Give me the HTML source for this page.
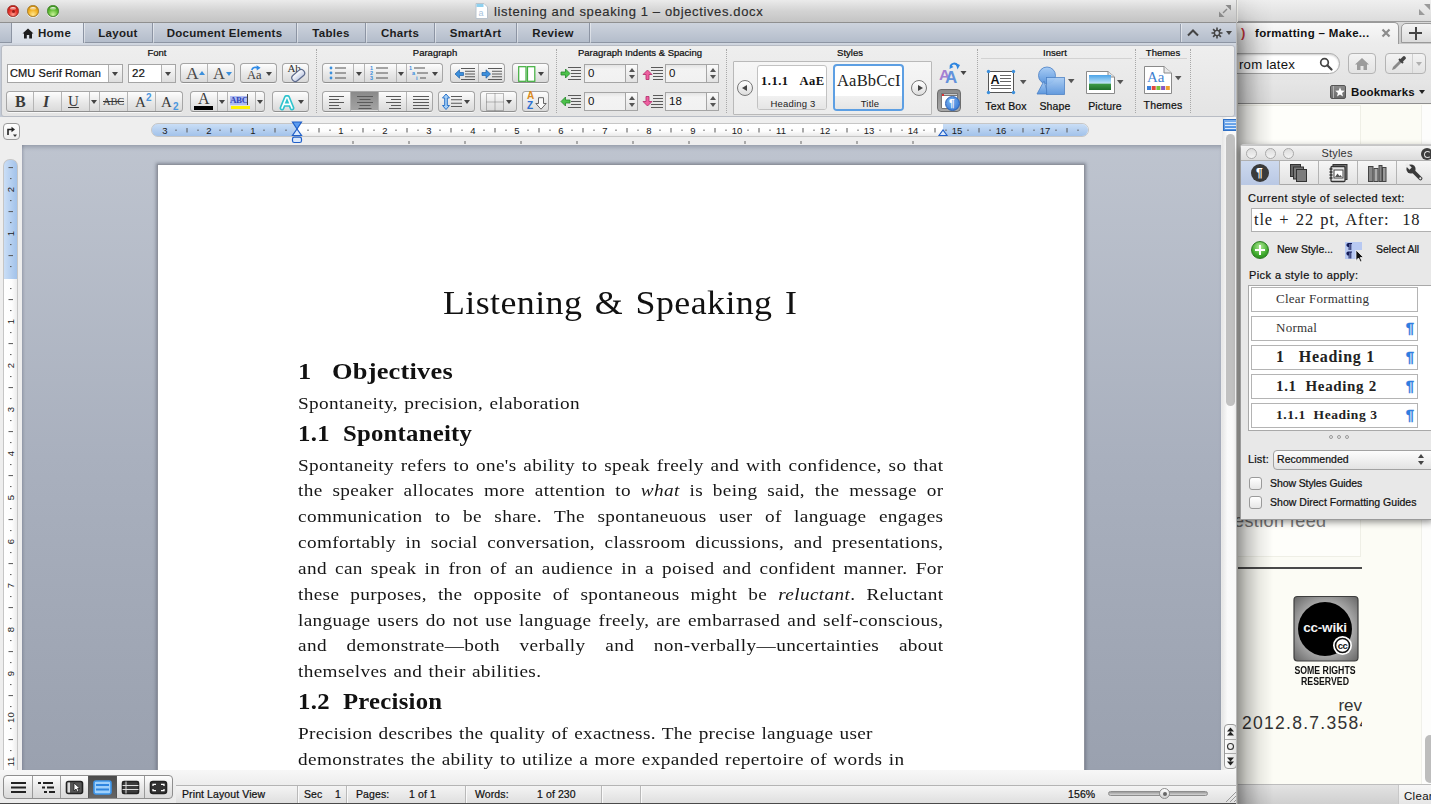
<!DOCTYPE html>
<html><head><meta charset="utf-8">
<style>
*{box-sizing:border-box;margin:0;padding:0}
html,body{width:1431px;height:804px;overflow:hidden;background:#fbfaf4;font-family:"Liberation Sans",sans-serif;font-size:11px;color:#111}
.abs{position:absolute}
#word{position:absolute;left:0;top:0;width:1237px;height:804px;background:#e9e9e9;overflow:hidden;box-shadow:none;border-right:1px solid rgba(110,110,110,.4)}
#titlebar{position:absolute;left:0;top:0;width:1238px;height:23px;background:linear-gradient(#ebebeb,#d3d3d3 50%,#c4c4c4);border-bottom:1px solid #8f8f8f}
#titlebar .t{position:absolute;left:494px;top:4px;font-size:13px;color:#2c2c2c;letter-spacing:.63px;white-space:nowrap;-webkit-text-stroke:.15px #2c2c2c}
.tl{position:absolute;top:5px;width:11.600px;height:11.600px;border-radius:50%}
#wtabs{position:absolute;left:0;top:23px;width:1238px;height:20px;background:linear-gradient(#cdd3dd,#b4bdcb);border-bottom:1px solid #8d95a3}
.wtab{position:absolute;top:0;height:20px;border-right:1px solid #8c94a3;font-weight:bold;font-size:11.5px;color:#1d1d1d;text-align:center;line-height:20px;letter-spacing:.3px;box-shadow:1px 0 0 rgba(255,255,255,.45)}
#ribbon{position:absolute;left:0;top:43px;width:1238px;height:74px;background:linear-gradient(#d2d8e1,#c9cfda 4px,#c3cad6 8px)}
#ribin{position:absolute;left:1px;top:2px;width:1234px;height:72px;background:linear-gradient(#eeeeee,#e4e4e4);border-radius:3px;border:1px solid #b8bcc4}
.glab{position:absolute;top:47px;font-size:9.5px;color:#0c0c0c;text-align:center;letter-spacing:0}
.gsep{position:absolute;top:49px;height:64px;width:0;border-left:1px dotted #a8a8a8}
.btn{position:absolute;height:20px;border:1px solid #a6a6a6;border-bottom-color:#8f8f8f;border-radius:3.5px;background:linear-gradient(#fdfdfd,#e8e8e8 55%,#dadada);box-shadow:0 1px 0 rgba(255,255,255,.7)}
.btn i{position:absolute;top:0;bottom:0;width:0;border-left:1px solid #b5b5b5}
.fld{position:absolute;height:19px;border:1px solid #a5a5a5;background:#fff;font-size:11.5px;line-height:17px;padding-left:3px;letter-spacing:.2px;white-space:nowrap}
.dar{position:absolute;width:0;height:0;border-left:3.5px solid transparent;border-right:3.5px solid transparent;border-top:4px solid #444}
#rulerbar{position:absolute;left:0;top:117px;width:1238px;height:28px;background:#eeeeee}
#docarea{position:absolute;left:22px;top:145px;width:1199px;height:625px;background:linear-gradient(#bec4cf,#a9b0be 50%,#9aa1af);box-shadow:inset 0 4px 4px -2px rgba(40,50,70,.28),inset 3px 0 3px -2px rgba(40,50,70,.2)}
#page{position:absolute;left:158px;top:165px;width:926px;height:620px;background:#fff;box-shadow:0 0 0 1px #8e929c,0 0 3px 2px rgba(80,85,100,.5)}
#vrul{position:absolute;left:0;top:145px;width:22px;height:625px;background:#eeeeee}
#status{position:absolute;left:0;top:770px;width:1238px;height:34px;background:linear-gradient(#f7f7f7,#ededed 15px,#ececec)}
.doc{font-family:"Liberation Serif",serif;color:#111;position:absolute;white-space:nowrap}
.jl{position:absolute;left:298px;width:586.8px;transform:scaleX(1.1);transform-origin:0 0;height:26px;font-family:"Liberation Serif",serif;font-size:17.5px;text-align:justify;text-align-last:justify;white-space:normal;color:#161616;line-height:26px;letter-spacing:.33px}
.nl{position:absolute;left:298px;transform:scaleX(1.1);transform-origin:0 0;height:26px;font-family:"Liberation Serif",serif;font-size:17.5px;word-spacing:1px;white-space:nowrap;color:#161616;line-height:26px;letter-spacing:.33px}
.h2{position:absolute;left:298px;transform:scaleX(1.1);transform-origin:0 0;font-family:"Liberation Serif",serif;font-weight:bold;font-size:22.5px;white-space:nowrap;color:#111;letter-spacing:.22px}
#ff{position:absolute;left:1237px;top:0;width:194px;height:804px;background:#fbfaf4}
#pal{position:absolute;left:1240px;top:145px;width:193px;height:375px;background:#e8e8e8;border:1px solid #9a9a9a;border-top-color:#c5c5c5;box-shadow:0 -1px 0 #c9c9c9,0 2px 7px rgba(0,0,0,.45);border-radius:4px 0 0 0;overflow:visible}
.srow{position:absolute;left:10px;width:167px;height:25px;background:#fff;border:1px solid #b4b4b4;font-family:"Liberation Serif",serif;white-space:nowrap}
.pil{position:absolute;right:3px;top:2px;color:#2f7de0;font-size:15px;-webkit-text-stroke:.3px #2f7de0;font-family:"Liberation Sans",sans-serif;font-weight:bold}
.sA{position:absolute;font-family:"Liberation Serif",serif;color:#6a6a6a;line-height:20px;white-space:nowrap}
.tu{position:absolute;width:0;height:0;border-left:3.5px solid transparent;border-right:3.5px solid transparent;border-bottom:4.5px solid #3b8fdc}
.td{position:absolute;width:0;height:0;border-left:3.5px solid transparent;border-right:3.5px solid transparent;border-top:4.5px solid #3b8fdc}
.cbb{position:absolute;right:0;top:0;width:14px;height:17px;border-left:1px solid #b0b0b0;background:linear-gradient(#fafafa,#dedede)}
.cbb:after{content:"";position:absolute;left:3px;top:7px;border-left:3.5px solid transparent;border-right:3.5px solid transparent;border-top:4px solid #444}
.spin{position:absolute;width:13px;height:19px;border:1px solid #a5a5a5;background:linear-gradient(#fbfbfb,#e2e2e2)}
.spin:before{content:"";position:absolute;left:2.5px;top:3px;border-left:3px solid transparent;border-right:3px solid transparent;border-bottom:4px solid #555}
.spin:after{content:"";position:absolute;left:2.5px;top:10px;border-left:3px solid transparent;border-right:3px solid transparent;border-top:4px solid #555}
.circ{position:absolute;width:16px;height:16px;border-radius:50%;border:1px solid #777;background:linear-gradient(#fff,#ddd)}
.circ b{position:absolute;width:0;height:0}
.ilab{position:absolute;top:99px;font-size:10.5px;text-align:center;color:#111;letter-spacing:.15px;white-space:nowrap}
.stx{position:absolute;top:788px;font-size:10.5px;line-height:13px;color:#111;white-space:nowrap;letter-spacing:.1px}
.sdiv{position:absolute;top:786px;width:1px;height:18px;background:#b9b9b9;box-shadow:1px 0 0 #fafafa}
.pc{position:absolute;top:2px;width:11px;height:11px;border-radius:50%;border:1px solid #a9a9a9;background:linear-gradient(#dcdcdc,#f4f4f4)}
.pt{position:absolute;margin-top:-1px;font-size:11px;line-height:14px;color:#111;white-space:nowrap;letter-spacing:.15px}
.pcb{position:absolute;left:8px;width:13px;height:13px;border:1px solid #9a9a9a;border-radius:3px;background:linear-gradient(#fff,#e6e6e6)}
.pt,.glab,.ilab,.stx{-webkit-text-stroke:.22px #111}
.gl{position:absolute;left:2px;top:.5px;width:5.600px;height:3.500px;border-radius:50%;background:linear-gradient(rgba(255,255,255,.9),rgba(255,255,255,.15))}
</style></head><body>

<!-- FIREFOX BEHIND -->
<div id="ff"><div class="abs" style="left:1px;top:0;width:193px;height:804px">
  <div class="abs" style="left:0;top:0;width:193px;height:22px;background:linear-gradient(#efefef,#dcdcdc);border-bottom:1px solid #9c9c9c"></div>
  <svg class="abs" style="left:180px;top:3px" width="13" height="13" viewBox="0 0 13 13"><path d="M6 1H12V7ZM1 6V12H7Z" fill="#9a9a9a"/></svg>
  <!-- tab strip -->
  <div class="abs" style="left:0;top:22px;width:193px;height:22px;background:linear-gradient(#d9d9d9,#c9c9c9)"></div>
  <div class="abs" style="left:-10px;top:22px;width:171px;height:23px;border:1px solid #9a9a9a;border-bottom:none;border-radius:5px 5px 0 0;background:linear-gradient(#f8f8f8,#ebebeb)"></div>
  <div class="abs" style="left:163px;top:23px;width:34px;height:20px;border:1px solid #9a9a9a;border-radius:5px 5px 0 0;background:linear-gradient(#f4f4f4,#dcdcdc)"></div>
  <div class="abs" style="left:171px;top:32px;width:13px;height:2px;background:#444"></div><div class="abs" style="left:176.500px;top:26.500px;width:2px;height:13px;background:#444"></div>
  <div class="abs" style="left:17px;top:26px;font-size:11.500px;font-weight:bold;color:#111;white-space:nowrap;letter-spacing:.32px;line-height:14px" id="fftab">formatting – Make...</div>
  <svg class="abs" style="left:143px;top:28px" width="10" height="10" viewBox="0 0 10 10"><path d="M1.500 1.500L8.500 8.500M8.500 1.500L1.500 8.500" stroke="#8c8c8c" stroke-width="2.200"/></svg>
  <div class="abs" style="left:3px;top:24px;color:#c8363c;font-size:13px;font-weight:bold;line-height:18px">)</div>
  <!-- nav bar -->
  <div class="abs" style="left:0;top:44px;width:193px;height:36px;background:linear-gradient(#ececec,#e4e4e4)"></div>
  <div class="abs" style="left:-20px;top:53px;width:122px;height:21px;border:1px solid #a8a8a8;border-radius:11px;background:#fff;box-shadow:inset 0 1px 2px rgba(0,0,0,.2)"></div>
  <div class="abs" style="left:1px;top:56px;font-size:13.200px;color:#111;line-height:18px;white-space:nowrap;letter-spacing:.2px" id="ffq">rom latex</div>
  <svg class="abs" style="left:81px;top:57px" width="14" height="14" viewBox="0 0 14 14"><circle cx="5.500" cy="5.500" r="3.800" fill="none" stroke="#444" stroke-width="1.700"/><path d="M8.300 8.300L12.500 12.500" stroke="#444" stroke-width="2.200" stroke-linecap="round"/></svg>
  <div class="abs" style="left:110px;top:53px;width:28px;height:21px;border:1px solid #b4b4b4;border-radius:4px;background:linear-gradient(#f3f3f3,#e3e3e3)"><svg class="abs" style="left:5px;top:3px" width="16" height="14" viewBox="0 0 16 14"><path d="M8 1L15 7.500H13V13H9.500V9H6.500V13H3V7.500H1Z" fill="#9c9c9c"/></svg></div>
  <div class="abs" style="left:147px;top:53px;width:41px;height:21px;border:1px solid #b4b4b4;border-radius:4px;background:linear-gradient(#f3f3f3,#e3e3e3)"><svg class="abs" style="left:4px;top:2px" width="18" height="16" viewBox="0 0 18 16"><path d="M2 14L3 11L9.500 4.500L11.500 6.500L5 13Z" fill="#8a8a8a"/><path d="M9 3L13 7" stroke="#444" stroke-width="2"/><path d="M11.500 4.500L14 2" stroke="#444" stroke-width="3.600" stroke-linecap="round"/></svg><div class="abs" style="left:26px;top:0;width:1px;height:19px;background:#d0d0d0"></div><div class="abs" style="left:30px;top:8px;border-left:3px solid transparent;border-right:3px solid transparent;border-top:4px solid #b0b0b0"></div></div>
  <!-- bookmarks bar -->
  <div class="abs" style="left:0;top:80px;width:193px;height:24px;background:linear-gradient(#e6e6e6,#dedede);border-bottom:1px solid #8f8f8f"></div>
  <div class="abs" style="left:92px;top:85px;width:16px;height:14px;border-radius:2px;background:linear-gradient(#8a8a8a,#6a6a6a);border:1px solid #555"><div class="abs" style="left:2px;top:0;width:1px;height:12px;background:#b5b5b5"></div><svg class="abs" style="left:3.500px;top:1px" width="10" height="10" viewBox="0 0 10 10"><path d="M5 .3L6.300 3.600L9.800 3.800L7.100 6L8 9.500L5 7.600L2 9.500L2.900 6L.2 3.800L3.700 3.600Z" fill="#fff"/></svg></div>
  <div class="abs" style="left:113px;top:85px;font-size:11.500px;font-weight:bold;color:#111;white-space:nowrap;letter-spacing:.12px;line-height:14px" id="ffbm">Bookmarks</div>
  <div class="abs" style="left:181px;top:90px;border-left:3.500px solid transparent;border-right:3.500px solid transparent;border-top:4px solid #222"></div>
  <!-- page content -->
  <div class="abs" style="left:0;top:105px;width:193px;height:680px;background:#fcfcf5"></div>
  <div class="abs" style="left:183px;top:105px;width:10px;height:680px;background:#fdfdfc;border-left:1px solid #f0f0ea"></div>
  <div class="abs" style="left:0;top:105px;width:123px;height:452px;background:#fefefa;border:1px solid #efefe6;border-left:none"></div>
  <div class="abs" style="left:-4px;top:510px;font-size:18px;color:#7a7a7a;white-space:nowrap;line-height:22px;letter-spacing:.4px">estion feed</div>
  <div class="abs" style="left:0;top:567px;width:124px;height:2px;background:#4a4a4a"></div>
  <!-- cc badge -->
  <svg class="abs" style="left:55px;top:595px" width="66" height="68" viewBox="0 0 66 68"><defs><radialGradient id="ccg" cx=".5" cy=".5" r=".75"><stop offset="0" stop-color="#e8e8e8"/><stop offset=".55" stop-color="#a8a8a8"/><stop offset="1" stop-color="#5a5a5a"/></radialGradient></defs><rect x="1" y="1.500" width="64" height="64.500" rx="3.500" fill="url(#ccg)" stroke="#3e3e3e" stroke-width="1.200"/><circle cx="32" cy="34" r="27" fill="#000"/><text x="32" y="36.500" text-anchor="middle" font-family="Liberation Sans" font-weight="bold" font-size="13.500" fill="#f4f4f4" letter-spacing="-.2">cc-wiki</text><circle cx="49.500" cy="50.500" r="9.500" fill="#fff"/><circle cx="49.500" cy="50.500" r="7" fill="none" stroke="#111" stroke-width="1.600"/><text x="49.500" y="53.600" text-anchor="middle" font-family="Liberation Sans" font-weight="bold" font-size="9.500" fill="#111" letter-spacing="-.6">cc</text></svg>
  <div class="abs" style="left:56px;top:664px;width:64px;text-align:center;font-size:11.500px;line-height:10.500px;color:#111;letter-spacing:0;white-space:nowrap;font-weight:bold;transform:scaleX(.76);left:41px;width:92px;top:665px">SOME RIGHTS<br>RESERVED</div>
  <div class="abs" style="left:60px;top:696px;width:64px;text-align:right;font-size:17px;color:#333;line-height:20px">rev</div>
  <div class="abs" style="left:4px;top:712.500px;width:120px;overflow:hidden;font-size:17.500px;color:#333;line-height:20px;white-space:nowrap;letter-spacing:1.28px">2012.8.7.35844</div>
  <!-- scrollbar -->
  <div class="abs" style="left:187px;top:735px;width:10px;height:48px;border-radius:5px;background:#bdbdbd"></div>
  <!-- bottom bar -->
  <div class="abs" style="left:0;top:784px;width:193px;height:20px;background:linear-gradient(#e3e3e3,#cfcfcf);border-top:1px solid #bdbdbd"></div>
  <div class="abs" style="left:160px;top:785px;width:40px;height:19px;background:linear-gradient(#f7f7f7,#e6e6e6);border-left:1px solid #c8c8c8"></div>
  <div class="abs" style="left:166px;top:789px;font-size:11.500px;color:#111;line-height:14px;letter-spacing:.3px">Clear</div>
  </div>
  <!-- shadow of word window -->
  <div class="abs" style="left:0;top:0;width:36px;height:804px;background:linear-gradient(90deg,rgba(0,0,0,.42),rgba(0,0,0,.22) 28%,rgba(0,0,0,.08) 62%,rgba(0,0,0,0));-webkit-mask-image:linear-gradient(180deg,rgba(0,0,0,.1) 0,rgba(0,0,0,.3) 18px,rgba(0,0,0,.85) 34px,#000 55px)"></div>
</div>
<!-- WORD WINDOW -->
<div id="word">
<div id="titlebar">
  <div class="tl" style="left:7.300px;background:radial-gradient(circle at 50% 85%,#ff9d90 0,#e8352c 45%,#b3140e 100%);border:1px solid #9e2a22;box-shadow:0 1px 0 rgba(255,255,255,.6)"><b class="gl"></b><b class="abs" style="left:3.300px;top:3.500px;width:3px;height:3px;border-radius:50%;background:#7a0c08;opacity:.75"></b></div>
  <div class="tl" style="left:27.200px;background:radial-gradient(circle at 50% 85%,#ffe68f 0,#f2b122 50%,#c07f08 100%);border:1px solid #a9781a;box-shadow:0 1px 0 rgba(255,255,255,.6)"><b class="gl"></b></div>
  <div class="tl" style="left:47px;background:radial-gradient(circle at 50% 85%,#c9f39a 0,#63bd35 50%,#2c8414 100%);border:1px solid #3b8423;box-shadow:0 1px 0 rgba(255,255,255,.6)"><b class="gl"></b></div>
  <svg class="abs" style="left:475px;top:3px" width="13" height="16" viewBox="0 0 13 16"><path d="M1 .5H9L12.500 4V15.500H1Z" fill="#fff" stroke="#b9c3cc" stroke-width="1"/><rect x="1.500" y="1" width="7" height="3" fill="#8fd0ee"/><text x="3.500" y="13" font-family="Liberation Sans" font-size="9" fill="#a9c4dc">a</text></svg>
  <svg class="abs" style="left:1218px;top:4px" width="14" height="14" viewBox="0 0 14 14"><path d="M7.500 1H13V6.500ZM1 7.500V13H6.500Z" fill="#8a8a8a"/><path d="M9 5L5 9" stroke="#8a8a8a" stroke-width="1.500"/></svg>
  <div class="t">listening and speaking 1 – objectives.docx</div>
</div>
<div id="wtabs">
  <div class="wtab" style="left:11px;width:73px;background:linear-gradient(#e6eaf0,#d6dce6);border-left:1px solid #8c94a3;height:21px"><svg class="abs" style="left:10px;top:5px" width="12" height="11" viewBox="0 0 12 11"><path d="M6 .5L11.500 5.500H10V10.500H7.200V7H4.800V10.500H2V5.500H.5Z" fill="#1d1d1d"/></svg><span style="padding-left:14px">Home</span></div>
  <div class="wtab" style="left:84px;width:69px">Layout</div>
  <div class="wtab" style="left:153px;width:144px">Document Elements</div>
  <div class="wtab" style="left:297px;width:69px">Tables</div>
  <div class="wtab" style="left:366px;width:69px">Charts</div>
  <div class="wtab" style="left:435px;width:82px">SmartArt</div>
  <div class="wtab" style="left:517px;width:73px">Review</div>
</div>
<div id="ribbon"><div id="ribin"></div></div>
<!--RIBBON-CONTENT-->
<div class="glab" style="left:137px;width:40px">Font</div>
<div class="glab" style="left:395px;width:80px">Paragraph</div>
<div class="glab" style="left:560px;width:160px">Paragraph Indents &amp; Spacing</div>
<div class="glab" style="left:820px;width:60px">Styles</div>
<div class="glab" style="left:1025px;width:60px">Insert</div>
<div class="glab" style="left:1133px;width:60px">Themes</div>
<div class="gsep" style="left:316px"></div>
<div class="gsep" style="left:556px"></div>
<div class="gsep" style="left:726px"></div>
<div class="gsep" style="left:977px"></div>
<div class="gsep" style="left:1135px"></div>
<div class="gsep" style="left:1190px"></div>

<!-- FONT row 1 -->
<div class="fld" style="left:7px;top:64px;width:116px;font-size:11px;letter-spacing:.12px;padding-left:2px;-webkit-text-stroke:.2px #111">CMU Serif Roman<div class="cbb"></div></div>
<div class="fld" style="left:128px;top:64px;width:48px;-webkit-text-stroke:.2px #111">22<div class="cbb"></div></div>
<div class="btn" style="left:180px;top:63px;width:55px"><i style="left:26px"></i>
  <span class="sA" style="left:5px;top:-1px;font-size:17.5px;color:#4a4a4a">A</span><b class="tu" style="left:18px;top:7px"></b>
  <span class="sA" style="left:32px;top:0px;font-size:16.5px;color:#4a4a4a">A</span><b class="td" style="left:45px;top:8px"></b>
</div>
<div class="btn" style="left:240px;top:63px;width:37px">
  <span class="sA" style="left:6px;top:1px;font-size:12.500px;letter-spacing:0;color:#3c3c3c">Aa</span>
  <svg class="abs" style="left:10px;top:1px" width="10" height="6" viewBox="0 0 10 6"><path d="M.8 5C1.500 2.300 4.500 1.800 6.500 2.800" stroke="#2f8ae6" stroke-width="1.700" fill="none"/><path d="M5.500 .3L9.600 2.800L5.800 5.600Z" fill="#2f8ae6"/></svg>
  <div class="dar" style="left:25px;top:8px"></div>
</div>
<div class="btn" style="left:282px;top:63px;width:27px">
  <span class="sA" style="left:4.500px;top:-6px;font-size:11px;color:#2e2e2e;letter-spacing:-.2px">Ab</span>
  <svg class="abs" style="left:5px;top:2px" width="21" height="18" viewBox="0 0 21 18"><defs><linearGradient id="erg" x1="0" y1="0" x2="0" y2="1"><stop offset="0" stop-color="#ffffff"/><stop offset="1" stop-color="#c4cde6"/></linearGradient></defs><rect x="3" y="6" width="14.500" height="7" rx="3.500" fill="url(#erg)" stroke="#5d6a8c" stroke-width="1.200" transform="rotate(-40 10.200 9.500)"/></svg>
</div>

<!-- FONT row 2 -->
<div class="btn" style="left:6px;top:90.500px;width:177px;height:21px"><i style="left:26px"></i><i style="left:54px"></i><i style="left:82px"></i><i style="left:92px"></i><i style="left:120px"></i><i style="left:148px"></i>
  <span class="sA" style="left:8px;top:0;font-size:16px;font-weight:bold;color:#3a3a3a">B</span>
  <span class="sA" style="left:36px;top:0;font-size:16px;font-weight:bold;font-style:italic;color:#3a3a3a">I</span>
  <span class="sA" style="left:61px;top:-1px;font-size:15px;color:#3a3a3a;text-decoration:underline">U</span>
  <div class="dar" style="left:84px;top:8px;border-left-width:3px;border-right-width:3px"></div>
  <span class="sA" style="left:96px;top:0px;font-size:10.5px;color:#3a3a3a;text-decoration:line-through;letter-spacing:-.2px">ABC</span>
  <span class="sA" style="left:128px;top:0px;font-size:15px;color:#3a3a3a">A</span><span class="sA" style="left:139px;top:-4px;font-size:10px;font-weight:bold;color:#4a97df;font-family:'Liberation Sans',sans-serif">2</span>
  <span class="sA" style="left:154px;top:0px;font-size:15px;color:#3a3a3a">A</span><span class="sA" style="left:166px;top:5px;font-size:10px;font-weight:bold;color:#4a97df;font-family:'Liberation Sans',sans-serif">2</span>
</div>
<div class="btn" style="left:190px;top:90.500px;width:75px;height:21px"><i style="left:26px"></i><i style="left:36px"></i><i style="left:64px"></i>
  <span class="sA" style="left:7px;top:-3px;font-size:16px;color:#3a3a3a">A</span>
  <div class="abs" style="left:3px;top:14px;width:19px;height:4px;background:#000"></div>
  <div class="dar" style="left:28px;top:8px;border-left-width:3px;border-right-width:3px"></div>
  <span class="abs" style="left:39px;top:4px;font-family:'Liberation Serif',serif;font-size:9px;line-height:9px;background:#aebcf3;color:#3347b8;letter-spacing:-.4px;height:9px;font-weight:bold">ABC</span>
  <div class="abs" style="left:40px;top:14px;width:19px;height:3px;background:#fff200"></div>
  <div class="abs" style="left:56px;top:2px;width:1px;height:11px;background:#444"></div>
  <div class="dar" style="left:66px;top:8px;border-left-width:3px;border-right-width:3px"></div>
</div>
<div class="btn" style="left:272px;top:90.500px;width:37px;height:21px">
  <svg class="abs" style="left:5px;top:2px" width="18" height="17" viewBox="0 0 18 17"><path d="M4 14 L8.300 3.500 H9.700 L14 14 M6 10.300 H12" stroke="#2fc3cd" stroke-width="4.800" fill="none" stroke-linejoin="round" stroke-linecap="round"/><path d="M4 14 L8.300 3.500 H9.700 L14 14 M6 10.300 H12" stroke="#fbffff" stroke-width="1.700" fill="none" stroke-linejoin="round" stroke-linecap="round"/></svg>
  <div class="dar" style="left:25px;top:8px"></div>
</div>
<!-- PARAGRAPH row 1 -->
<div class="btn" style="left:322px;top:63px;width:121px"><i style="left:30px"></i><i style="left:41px"></i><i style="left:73px"></i><i style="left:83px"></i>
  <svg class="abs" style="left:6px;top:2px" width="20" height="14" viewBox="0 0 20 14"><g fill="#3b8fdc"><circle cx="2" cy="2" r="1.4"/><circle cx="2" cy="7" r="1.4"/><circle cx="2" cy="12" r="1.4"/></g><g stroke="#555" stroke-width="1.15"><path d="M6 2H17M6 7H17M6 12H17"/></g></svg>
  <div class="dar" style="left:33px;top:8px;border-left-width:3px;border-right-width:3px"></div>
  <svg class="abs" style="left:46px;top:1px" width="24" height="16" viewBox="0 0 24 16"><g fill="#3b8fdc" font-family="Liberation Sans" font-size="5.5" font-weight="bold"><text x="1" y="5">1</text><text x="1" y="10">2</text><text x="1" y="15">3</text></g><g stroke="#555" stroke-width="1.15"><path d="M7 3H19M7 8H19M7 13H19"/></g></svg>
  <div class="dar" style="left:75px;top:8px;border-left-width:3px;border-right-width:3px"></div>
  <svg class="abs" style="left:85px;top:1px" width="24" height="16" viewBox="0 0 24 16"><g fill="#3b8fdc" font-family="Liberation Sans" font-size="5.5" font-weight="bold"><text x="1" y="5">1</text><text x="4" y="10">a</text><text x="8" y="15">i</text></g><g stroke="#555" stroke-width="1.15"><path d="M6 3H17M9 8H20M12 13H18"/></g></svg>
  <div class="dar" style="left:109px;top:8px"></div>
</div>
<div class="btn" style="left:450px;top:63px;width:55px"><i style="left:27px"></i>
  <svg class="abs" style="left:3px;top:3px" width="22" height="14" viewBox="0 0 22 14"><g stroke="#5a5a5a" stroke-width="1.05"><path d="M7 1.5H21M11 4.2H21M11 7H21M11 9.8H21M7 12.5H21"/></g><path d="M1 7L5.5 2.8V5.5H9.5V8.5H5.5V11.2Z" fill="#3b8fdc" stroke="#1c5ea8" stroke-width=".7"/></svg>
  <svg class="abs" style="left:30px;top:3px" width="22" height="14" viewBox="0 0 22 14"><g stroke="#5a5a5a" stroke-width="1.05"><path d="M7 1.5H21M11 4.2H21M11 7H21M11 9.8H21M7 12.5H21"/></g><path d="M9.5 7L5 2.8V5.5H1V8.5H5V11.2Z" fill="#3b8fdc" stroke="#1c5ea8" stroke-width=".7"/></svg>
</div>
<div class="btn" style="left:512px;top:63px;width:37px">
  <svg class="abs" style="left:5px;top:2px" width="18" height="16" viewBox="0 0 18 16"><rect x=".7" y=".7" width="7.3" height="14.6" fill="#fff" stroke="#3fae3c" stroke-width="1.2"/><rect x="9.5" y=".7" width="7.3" height="14.6" fill="#fff" stroke="#3fae3c" stroke-width="1.2"/></svg>
  <div class="dar" style="left:25px;top:8px"></div>
</div>
<!-- PARAGRAPH row 2 -->
<div class="btn" style="left:322px;top:90.500px;width:111px;height:21px"><div class="abs" style="left:27px;top:0;width:28px;height:18px;background:linear-gradient(#8a8a8a,#a3a3a3)"></div><i style="left:27px"></i><i style="left:55px"></i><i style="left:83px"></i>
  <svg class="abs" style="left:5px;top:3px" width="18" height="14" viewBox="0 0 18 14"><g stroke="#5a5a5a" stroke-width="1.05"><path d="M1 1.5H16M1 4.5H11M1 7.5H16M1 10.5H11M1 13.4H13"/></g></svg>
  <svg class="abs" style="left:33px;top:3px" width="18" height="14" viewBox="0 0 18 14"><g stroke="#5a5a5a" stroke-width="1.05"><path d="M1 1.5H17M3.5 4.5H14.5M1 7.5H17M3.5 10.5H14.5M2.5 13.4H15.5"/></g></svg>
  <svg class="abs" style="left:61px;top:3px" width="18" height="14" viewBox="0 0 18 14"><g stroke="#5a5a5a" stroke-width="1.05"><path d="M2 1.5H17M7 4.5H17M2 7.5H17M7 10.5H17M5 13.4H17"/></g></svg>
  <svg class="abs" style="left:89px;top:3px" width="18" height="14" viewBox="0 0 18 14"><g stroke="#5a5a5a" stroke-width="1.05"><path d="M1 1.5H17M1 4.5H17M1 7.5H17M1 10.5H17M1 13.4H17"/></g></svg>
</div>
<div class="btn" style="left:438px;top:90.500px;width:37px;height:21px">
  <svg class="abs" style="left:3px;top:1px" width="22" height="18" viewBox="0 0 22 18"><g stroke="#5a5a5a" stroke-width="1.05"><path d="M9 3.5H20M9 6.8H20M9 10.2H20M9 13.5H20"/></g><path d="M4 1L7.5 5H5.3V12.5H7.5L4 16.5L.5 12.5H2.7V5H.5Z" fill="#a6d0f7" stroke="#2a72c8" stroke-width="1"/></svg>
  <div class="dar" style="left:25px;top:8px"></div>
</div>
<div class="btn" style="left:480px;top:90.500px;width:37px;height:21px">
  <svg class="abs" style="left:5px;top:1px" width="18" height="18" viewBox="0 0 18 18"><g stroke="#777" stroke-width="1" stroke-dasharray="1 1" fill="none"><path d="M.5 .5H17.5V17.5H.5ZM9 .5V17.5M.5 9H17.5"/></g></svg>
  <div class="dar" style="left:25px;top:8px"></div>
</div>
<div class="btn" style="left:522px;top:90.500px;width:27px;height:21px">
  <span class="abs" style="left:4px;top:-1px;font-size:10px;font-weight:bold;color:#d98a1c;line-height:10px">A</span>
  <span class="abs" style="left:4px;top:9px;font-size:10px;font-weight:bold;color:#2d6fd0;line-height:10px">Z</span>
  <svg class="abs" style="left:12px;top:5px" width="12" height="13" viewBox="0 0 12 13"><path d="M3.5 .7H8.5V6.5H11.2L6 12.2L.8 6.5H3.5Z" fill="#fafafa" stroke="#666" stroke-width="1"/></svg>
</div>
<!-- INDENTS -->
<div class="fld" style="left:584px;top:64px;width:42px;height:19px;background:linear-gradient(#e4e4e4,#f3f3f3 25%,#f1f1f1);border-radius:0">0</div><div class="spin" style="left:625px;top:64px"></div>
<div class="fld" style="left:584px;top:92px;width:42px;height:19px;background:linear-gradient(#e4e4e4,#f3f3f3 25%,#f1f1f1)">0</div><div class="spin" style="left:625px;top:92px"></div>
<div class="fld" style="left:665px;top:64px;width:42px;height:19px;background:linear-gradient(#e4e4e4,#f3f3f3 25%,#f1f1f1)">0</div><div class="spin" style="left:706px;top:64px"></div>
<div class="fld" style="left:665px;top:92px;width:42px;height:19px;background:linear-gradient(#e4e4e4,#f3f3f3 25%,#f1f1f1)">18</div><div class="spin" style="left:706px;top:92px"></div>
<svg class="abs" style="left:560px;top:66px" width="22" height="15" viewBox="0 0 22 15"><g stroke="#5a5a5a" stroke-width="1.05"><path d="M8 1.5H21M11 4.5H21M11 7.5H21M11 10.5H21M8 13.5H21"/></g><path d="M10 7.5L5.5 3V6H1V9H5.5V12Z" fill="#4cc24a" stroke="#23872a" stroke-width=".8"/></svg>
<svg class="abs" style="left:560px;top:94px" width="22" height="15" viewBox="0 0 22 15"><g stroke="#5a5a5a" stroke-width="1.05"><path d="M8 1.5H21M11 4.5H21M11 7.5H21M11 10.5H21M8 13.5H21"/></g><path d="M1 7.5L5.5 3V6H10V9H5.5V12Z" fill="#4cc24a" stroke="#23872a" stroke-width=".8"/></svg>
<svg class="abs" style="left:642px;top:66px" width="22" height="15" viewBox="0 0 22 15"><g stroke="#5a5a5a" stroke-width="1.05"><path d="M9 1.5H21M9 4.5H21M11 7.5H21M11 10.5H21M11 13.5H21"/></g><path d="M5.5 4L10 8.5H7V13.5H4V8.5H1Z" fill="#ee5fa0" stroke="#b02a68" stroke-width=".8"/></svg>
<svg class="abs" style="left:642px;top:94px" width="22" height="15" viewBox="0 0 22 15"><g stroke="#5a5a5a" stroke-width="1.05"><path d="M11 1.5H21M11 4.5H21M11 7.5H21M9 10.5H21M9 13.5H21"/></g><path d="M5.5 12L10 7.5H7V2.5H4V7.5H1Z" fill="#ee5fa0" stroke="#b02a68" stroke-width=".8"/></svg>
<!-- STYLES -->
<div class="abs" style="left:733px;top:61px;width:199px;height:54px;border:1px solid #b9b9b9;border-radius:1px;background:linear-gradient(#f6f6f6,#ececec)"></div>
<div class="circ" style="left:737px;top:80px"><b style="left:3.500px;top:3.500px;border-right:5px solid #444;border-top:3.5px solid transparent;border-bottom:3.5px solid transparent"></b></div>
<div class="circ" style="left:911px;top:80px"><b style="left:5.500px;top:3.500px;border-left:5px solid #444;border-top:3.5px solid transparent;border-bottom:3.5px solid transparent"></b></div>
<div class="abs" style="left:757px;top:65px;width:70px;height:45px;border:1px solid #c2c2c2;border-radius:3px;background:#fff;overflow:hidden">
  <div class="abs" style="left:0;top:30px;width:70px;height:16px;background:linear-gradient(#f1f1f1,#e2e2e2);font-size:9.5px;text-align:center;line-height:15px;color:#222;letter-spacing:.2px">Heading 3</div>
  <div class="abs" style="left:3px;top:8px;font-family:'Liberation Serif',serif;font-weight:bold;font-size:12.5px;white-space:nowrap;letter-spacing:.5px;color:#111">1.1.1 &nbsp;&nbsp;AaE</div>
</div>
<div class="abs" style="left:833px;top:64px;width:71px;height:47px;border:2px solid #5d9fe3;border-radius:4px;background:#fff;overflow:hidden">
  <div class="abs" style="left:0;top:30px;width:70px;height:16px;background:linear-gradient(#f1f1f1,#e2e2e2);font-size:9.5px;text-align:center;line-height:15px;color:#222;letter-spacing:.2px">Title</div>
  <div class="abs" id="tAa" style="left:2px;top:5px;font-family:'Liberation Serif',serif;font-size:16.5px;white-space:nowrap;letter-spacing:.2px;color:#222">AaBbCcI</div>
</div>
<svg class="abs" style="left:937px;top:60px" width="32" height="26" viewBox="0 0 32 26"><text x="2" y="19.500" font-family="Liberation Sans" font-size="15.500" font-weight="bold" fill="#a47fd2">A</text><text x="8" y="22.500" font-family="Liberation Sans" font-size="17" font-weight="bold" fill="#6292dc">A</text><path d="M13.500 6.500C14.500 3 18.500 2.500 20.500 5.500" stroke="#2f86e0" stroke-width="1.800" fill="none"/><path d="M18.500 3L23 5L20.500 9.500Z" fill="#2f86e0"/><path d="M13 4.500L12.500 9L16.500 7Z" fill="#2f86e0"/><path d="M23.500 11H29.500L26.500 15Z" fill="#444"/></svg>
<div class="abs" style="left:937px;top:89px;width:24px;height:23px;border:1px solid #6e6e6e;border-radius:4px;background:linear-gradient(#8c8c8c,#a8a8a8)">
  <div class="abs" style="left:3px;top:3px;width:17px;height:16px;background:#fff;border:1px solid #777;border-radius:1px"></div>
  <div class="abs" style="left:3px;top:3px;width:17px;height:3px;background:#c9c9c9;border:1px solid #777"></div>
  <div class="abs" style="left:4px;top:4px;width:2px;height:2px;background:#d33"></div>
  <div class="abs" style="left:7px;top:6px;width:15px;height:15px;border-radius:50%;background:radial-gradient(circle at 40% 35%,#7db4f0,#2b6fd0);border:1px solid #2a62b8"></div>
  <div class="abs" style="left:11px;top:7px;color:#fff;font-size:10px;font-weight:bold;line-height:13px">¶</div>
</div>
<div class="abs" style="left:981px;top:58px;width:151px;height:1px;background:#d2d2d2"></div><div class="abs" style="left:1139px;top:58px;width:48px;height:1px;background:#d2d2d2"></div>
<!-- INSERT -->
<svg class="abs" style="left:986px;top:69px" width="42" height="26" viewBox="0 0 42 26"><rect x="2.5" y="2.5" width="25" height="21" fill="#fff" stroke="#555" stroke-width="1"/><g stroke="#666" stroke-width="1"><path d="M14 6.5H25M14 9.5H25M14 12.5H25M5 16.5H25M5 19.5H25"/></g><text x="4.500" y="14.500" font-family="Liberation Sans" font-weight="bold" font-size="12.500" fill="#111">A</text><g fill="#3b8fdc"><circle cx="2.5" cy="2.5" r="1.7"/><circle cx="27.5" cy="2.5" r="1.7"/><circle cx="2.5" cy="23.5" r="1.7"/><circle cx="27.5" cy="23.5" r="1.7"/></g><path d="M34 11H40.5L37.2 15.2Z" fill="#555"/></svg>
<svg class="abs" style="left:1036px;top:66px" width="44" height="30" viewBox="0 0 44 30"><defs><linearGradient id="sg" x1="0" y1="0" x2="0" y2="1"><stop offset="0" stop-color="#a9cdf5"/><stop offset="1" stop-color="#5d97dd"/></linearGradient></defs><circle cx="11" cy="9.5" r="8.5" fill="url(#sg)" stroke="#4a7fc4" stroke-width=".8"/><path d="M1 28L8 15L12 28Z" fill="url(#sg)" stroke="#4a7fc4" stroke-width=".8"/><rect x="10.5" y="11.5" width="18" height="17" fill="url(#sg)" stroke="#4a7fc4" stroke-width=".8" opacity=".95"/><path d="M32 13H38.5L35.2 17.2Z" fill="#555"/></svg>
<svg class="abs" style="left:1085px;top:68px" width="42" height="28" viewBox="0 0 42 28"><defs><linearGradient id="pg" x1="0" y1="0" x2="0" y2="1"><stop offset="0" stop-color="#4aa3e8"/><stop offset=".55" stop-color="#bfe3f7"/><stop offset=".6" stop-color="#3c9a46"/><stop offset="1" stop-color="#1f6f2c"/></linearGradient></defs><path d="M1.5 3.5H23L29.5 9V25.5H1.5Z" fill="#fff" stroke="#8a8a8a" stroke-width="1"/><path d="M23 3.5V9H29.5" fill="#e4e4e4" stroke="#8a8a8a" stroke-width="1"/><rect x="4" y="7" width="22" height="15" fill="url(#pg)"/><path d="M32 12H38.5L35.2 16.2Z" fill="#555"/></svg>
<div class="ilab" style="left:976px;width:60px;top:100px">Text Box</div>
<div class="ilab" style="left:1025px;width:60px;top:100px">Shape</div>
<div class="ilab" style="left:1075px;width:60px;top:100px">Picture</div>
<!-- THEMES -->
<svg class="abs" style="left:1143px;top:65px" width="44" height="32" viewBox="0 0 44 32"><path d="M1.5 1.5H21L28.5 8V28.5H1.5Z" fill="#fff" stroke="#8a8a8a" stroke-width="1"/><path d="M21 1.5V8H28.5" fill="#e8e8e8" stroke="#8a8a8a" stroke-width="1"/><text x="4" y="17" font-family="Liberation Serif" font-size="15" fill="#3f7fd0">Aa</text><g><rect x="4" y="21" width="4" height="4" fill="#3b7fd9"/><rect x="8.7" y="21" width="4" height="4" fill="#e0483c"/><rect x="13.4" y="21" width="4" height="4" fill="#7abf3c"/><rect x="18.1" y="21" width="4" height="4" fill="#8a58c2"/><rect x="22.8" y="21" width="4" height="4" fill="#f0a030"/></g><path d="M32 11H38.5L35.2 15.2Z" fill="#555"/></svg>
<div class="ilab" style="left:1133px;width:60px">Themes</div>
<!-- tab bar right icons -->
<div class="abs" style="left:1180px;top:24px;width:1px;height:18px;background:#959dab;box-shadow:1px 0 0 rgba(255,255,255,.45)"></div>
<svg class="abs" style="left:1186px;top:26px" width="50" height="14" viewBox="0 0 50 14"><path d="M2 9.5L7 4.5L12 9.5" stroke="#444" stroke-width="2" fill="none"/><g transform="translate(31 7)" stroke="#444" stroke-width="1.6"><path d="M0-5.5V5.5M-5.5 0H5.5M-3.9-3.9L3.9 3.9M-3.9 3.9L3.9-3.9"/><circle r="2.6" fill="#c3cad6" stroke="#444" stroke-width="1.4"/></g><path d="M40 5H46L43 9Z" fill="#444"/></svg>
<div id="rulerbar"></div>
<div class="abs" style="left:151px;top:123px;width:938px;height:14px;border-radius:7px;background:linear-gradient(#fff,#fdfdfd 60%,#e9e9e9);border:1px solid #c6c6c6;overflow:hidden"><div class="abs" style="left:-1px;top:-1px;width:147px;height:14px;border-radius:7px 0 0 7px;border:1px solid #86a8d6;border-right:none;background:linear-gradient(#cadef6,#a2c2ea)"></div><div class="abs" style="left:791px;top:-1px;width:147px;height:14px;border-radius:0 7px 7px 0;border:1px solid #86a8d6;border-left:none;background:linear-gradient(#cadef6,#a2c2ea)"></div></div>
<svg class="abs" style="left:151px;top:120px" width="938" height="25" viewBox="0 -3 938 25" font-family="Liberation Sans" font-size="9.5" fill="#1a1a1a" text-anchor="middle"><text x="14.0" y="10.6">3</text><text x="58.0" y="10.6">2</text><text x="102.0" y="10.6">1</text><text x="190.0" y="10.6">1</text><text x="234.0" y="10.6">2</text><text x="278.0" y="10.6">3</text><text x="322.0" y="10.6">4</text><text x="366.0" y="10.6">5</text><text x="410.0" y="10.6">6</text><text x="454.0" y="10.6">7</text><text x="498.0" y="10.6">8</text><text x="542.0" y="10.6">9</text><text x="586.0" y="10.6">10</text><text x="630.0" y="10.6">11</text><text x="674.0" y="10.6">12</text><text x="718.0" y="10.6">13</text><text x="762.0" y="10.6">14</text><text x="806.0" y="10.6">15</text><text x="850.0" y="10.6">16</text><text x="894.0" y="10.6">17</text><path d="M36.0 5V9.5M80.0 5V9.5M124.0 5V9.5M168.0 5V9.5M212.0 5V9.5M256.0 5V9.5M300.0 5V9.5M344.0 5V9.5M388.0 5V9.5M432.0 5V9.5M476.0 5V9.5M520.0 5V9.5M564.0 5V9.5M608.0 5V9.5M652.0 5V9.5M696.0 5V9.5M740.0 5V9.5M784.0 5V9.5M828.0 5V9.5M872.0 5V9.5M916.0 5V9.5" stroke="#555" stroke-width="1"/><path d="M25.0 6.5V8M47.0 6.5V8M69.0 6.5V8M91.0 6.5V8M113.0 6.5V8M135.0 6.5V8M157.0 6.5V8M179.0 6.5V8M201.0 6.5V8M223.0 6.5V8M245.0 6.5V8M267.0 6.5V8M289.0 6.5V8M311.0 6.5V8M333.0 6.5V8M355.0 6.5V8M377.0 6.5V8M399.0 6.5V8M421.0 6.5V8M443.0 6.5V8M465.0 6.5V8M487.0 6.5V8M509.0 6.5V8M531.0 6.5V8M553.0 6.5V8M575.0 6.5V8M597.0 6.5V8M619.0 6.5V8M641.0 6.5V8M663.0 6.5V8M685.0 6.5V8M707.0 6.5V8M729.0 6.5V8M751.0 6.5V8M773.0 6.5V8M795.0 6.5V8M817.0 6.5V8M839.0 6.5V8M861.0 6.5V8M883.0 6.5V8M905.0 6.5V8M927.0 6.5V8" stroke="#555" stroke-width="1"/><path d="M202.0 18V21M258.0 18V21M314.0 18V21M370.0 18V21M426.0 18V21M482.0 18V21M538.0 18V21M594.0 18V21M650.0 18V21M706.0 18V21M762.0 18V21" stroke="#666" stroke-width="1"/><path d="M141.5 -1H150.5L146.0 6Z" fill="#5b9cf0" stroke="#1f5fc8" stroke-width="1.2"/><path d="M141.5 12.5H150.5L146.0 6Z" fill="#d9e8fc" stroke="#1f5fc8" stroke-width="1.2"/><rect x="141.5" y="14.2" width="9" height="5.3" rx="1.8" fill="#d9e8fc" stroke="#1f5fc8" stroke-width="1.2"/><path d="M788 12.5H796L792 7Z" fill="#d9e8fc" stroke="#1f5fc8" stroke-width="1.1"/></svg>
<div class="abs" style="left:3px;top:123px;width:17px;height:17px;border:1px solid #9a9a9a;border-radius:4px;background:linear-gradient(#fff,#eee)"><svg width="15" height="15" viewBox="0 0 15 15"><path d="M4 11V5.5H8.5" stroke="#222" stroke-width="1.6" fill="none"/><path d="M7.5 2.8L11 5.5L7.5 8.2Z" fill="#222"/><path d="M9 10.5H13L11 13Z" fill="#333"/></svg></div>
<div id="vrul"></div>
<div class="abs" style="left:3px;top:159px;width:15px;height:640px;border-radius:7px 7px 0 0;background:linear-gradient(90deg,#fff,#fdfdfd 60%,#ececec);border:1px solid #c6c6c6;border-bottom:none;overflow:hidden"><div class="abs" style="left:-1px;top:-1px;width:15px;height:120px;border:1px solid #86a8d6;border-bottom:none;border-radius:7px 7px 0 0;background:linear-gradient(90deg,#cadef6,#a2c2ea)"></div></div>
<svg class="abs" style="left:3px;top:145px" width="15" height="625" viewBox="0 0 15 625" font-family="Liberation Sans" font-size="9.5" fill="#1a1a1a" text-anchor="middle"><text transform="translate(11 44.6) rotate(-90)" x="0" y="0">2</text><text transform="translate(11 88.6) rotate(-90)" x="0" y="0">1</text><text transform="translate(11 176.6) rotate(-90)" x="0" y="0">1</text><text transform="translate(11 220.6) rotate(-90)" x="0" y="0">2</text><text transform="translate(11 264.6) rotate(-90)" x="0" y="0">3</text><text transform="translate(11 308.6) rotate(-90)" x="0" y="0">4</text><text transform="translate(11 352.6) rotate(-90)" x="0" y="0">5</text><text transform="translate(11 396.6) rotate(-90)" x="0" y="0">6</text><text transform="translate(11 440.6) rotate(-90)" x="0" y="0">7</text><text transform="translate(11 484.6) rotate(-90)" x="0" y="0">8</text><text transform="translate(11 528.6) rotate(-90)" x="0" y="0">9</text><text transform="translate(11 572.6) rotate(-90)" x="0" y="0">10</text><text transform="translate(11 616.6) rotate(-90)" x="0" y="0">11</text><path d="M5.5 22.6H10M5.5 66.6H10M5.5 110.6H10M5.5 154.6H10M5.5 198.6H10M5.5 242.6H10M5.5 286.6H10M5.5 330.6H10M5.5 374.6H10M5.5 418.6H10M5.5 462.6H10M5.5 506.6H10M5.5 550.6H10M5.5 594.6H10" stroke="#555" stroke-width="1"/><path d="M7 33.6H8.5M7 55.6H8.5M7 77.6H8.5M7 99.6H8.5M7 121.6H8.5M7 143.6H8.5M7 165.6H8.5M7 187.6H8.5M7 209.6H8.5M7 231.6H8.5M7 253.6H8.5M7 275.6H8.5M7 297.6H8.5M7 319.6H8.5M7 341.6H8.5M7 363.6H8.5M7 385.6H8.5M7 407.6H8.5M7 429.6H8.5M7 451.6H8.5M7 473.6H8.5M7 495.6H8.5M7 517.6H8.5M7 539.6H8.5M7 561.6H8.5M7 583.6H8.5M7 605.6H8.5" stroke="#555" stroke-width="1"/></svg>
<div id="docarea"></div>
<div id="page"></div>
<div class="doc" id="dtitle" style="left:443px;top:282px;font-size:34.5px;line-height:40px;letter-spacing:.4px;word-spacing:3px;transform:scaleX(1.04);transform-origin:0 0">Listening &amp; Speaking I</div>
<div class="doc" id="dh1" style="left:298px;top:356px;font-size:24px;line-height:30px;font-weight:bold;letter-spacing:.2px;transform:scaleX(1.1);transform-origin:0 0"><span style="display:inline-block;width:30.9px;letter-spacing:0">1</span><span id="w1">Objectives</span></div>
<div class="nl" id="dn1" style="top:390px">Spontaneity, precision, elaboration</div>
<div class="h2" id="dh2a" style="top:419px;line-height:30px"><span style="display:inline-block;width:40.9px;letter-spacing:.3px">1.1</span><span id="w2">Spontaneity</span></div>
<div class="jl" style="top:452px">Spontaneity refers to one's ability to speak freely and with confidence, so that</div>
<div class="jl" style="top:477px">the speaker allocates more attention to <i>what</i> is being said, the message or</div>
<div class="jl" style="top:503px">communication to be share. The spontaneuous user of language engages</div>
<div class="jl" style="top:529px">comfortably in social conversation, classroom dicussions, and presentations,</div>
<div class="jl" style="top:555px">and can speak in fron of an audience in a poised and confident manner. For</div>
<div class="jl" style="top:581px">these purposes, the opposite of spontaneous might be <i>reluctant</i>. Reluctant</div>
<div class="jl" style="top:607px">language users do not use language freely, are embarrased and self-conscious,</div>
<div class="jl" style="top:632px">and demonstrate—both verbally and non-verbally—uncertainties about</div>
<div class="nl" id="dn2" style="top:658px">themselves and their abilities.</div>
<div class="h2" id="dh2b" style="top:687px;line-height:30px"><span style="display:inline-block;width:40.9px;letter-spacing:.3px">1.2</span><span id="w3">Precision</span></div>
<div class="nl" id="dn3" style="top:720px;letter-spacing:.27px">Precision describes the quality of exactness. The precise language user</div>
<div class="nl" id="dn4" style="top:746px;letter-spacing:.36px">demonstrates the ability to utilize a more expanded repertoire of words in</div>
<div id="status"></div>
<!-- vertical scrollbar -->
<div class="abs" style="left:1222px;top:117px;width:16px;height:653px;background:linear-gradient(90deg,#e6e6e6,#fafafa 35%,#f8f8f8)"></div>
<div class="abs" style="left:1223px;top:119px;width:15px;height:12px;background:linear-gradient(#7fb2ee,#4d8fe0);border:1px solid #2f6fc4"><div class="abs" style="left:1px;top:2px;width:11px;height:1px;background:#dbeafc;box-shadow:0 3px 0 #dbeafc,0 6px 0 #dbeafc"></div></div>
<div class="abs" style="left:1226px;top:134px;width:9px;height:272px;border-radius:5px;background:#c1c1c1"></div>
<div class="abs" style="left:1224px;top:724px;width:13px;height:45px;border:1px solid #9a9a9a;border-radius:4px;background:linear-gradient(90deg,#fdfdfd,#e4e4e4)">
  <div class="abs" style="left:0;top:14px;width:11px;height:1px;background:#aaa"></div><div class="abs" style="left:0;top:28px;width:11px;height:1px;background:#aaa"></div>
  <svg class="abs" style="left:0;top:0" width="11" height="43" viewBox="0 0 11 43"><path d="M5.5 2.5L9 6.5H2ZM5.5 6.5L9 10.5H2Z" fill="#222"/><circle cx="5.5" cy="21.5" r="3" fill="none" stroke="#333" stroke-width="1.1"/><path d="M5.5 40.5L9 36.5H2ZM5.5 36.5L9 32.5H2Z" fill="#222"/></svg>
</div>
<!-- view buttons -->
<div class="abs" style="left:3px;top:775px;width:170px;height:24px;border:1px solid #8e8e8e;border-radius:4px;background:linear-gradient(#fefefe,#e9e9e9 50%,#d9d9d9);overflow:hidden">
  <div class="abs" style="left:84px;top:0;width:28px;height:22px;background:linear-gradient(#4b4b4b,#666)"></div>
  <div class="abs" style="left:28px;top:0;width:1px;height:22px;background:#9a9a9a"></div><div class="abs" style="left:56px;top:0;width:1px;height:22px;background:#9a9a9a"></div><div class="abs" style="left:84px;top:0;width:1px;height:22px;background:#555"></div><div class="abs" style="left:112px;top:0;width:1px;height:22px;background:#555"></div><div class="abs" style="left:140px;top:0;width:1px;height:22px;background:#9a9a9a"></div>
  <svg class="abs" style="left:0;top:0" width="168" height="22" viewBox="0 0 168 22">
   <g stroke="#222" stroke-width="2"><path d="M7 7H22M7 11.5H22M7 16H22"/></g>
   <g stroke="#222" stroke-width="2"><path d="M34 7H37M39 7H49M38 11.5H41M43 11.5H50M40 16H43M45 16H51"/></g>
   <rect x="62.5" y="5.5" width="16" height="12" rx="2" fill="#555" stroke="#222" stroke-width="1.6"/><rect x="63.500" y="6.500" width="2.500" height="10" fill="#ddd"/><path d="M70 7V15L72 13L73.5 16L75 15.3L73.6 12.5H76Z" fill="#fff" stroke="#222" stroke-width=".8"/>
   <rect x="90" y="5" width="17" height="13" rx="2" fill="#9fd0fb" stroke="#3d95ea" stroke-width="1.6"/><path d="M92 9H105M92 13.5H105" stroke="#2f86e0" stroke-width="1.8"/>
   <rect x="118.5" y="5.5" width="16" height="12" rx="1.5" fill="#3c3c3c" stroke="#222" stroke-width="1.6"/><path d="M118.5 9.5H134.5M118.5 13.5H134.5M122 5.5V17.5" stroke="#ddd" stroke-width="1"/>
   <rect x="146.500" y="5.500" width="16" height="12" rx="2.500" fill="#333" stroke="#222" stroke-width="1.600"/><path d="M149 10V8.300H152M157 8.300H160V10M160 13V14.700H157M152 14.700H149V13" stroke="#fff" stroke-width="1.300" fill="none"/>
  </svg>
</div>
<!-- status fields -->
<div class="abs" style="left:176px;top:785px;width:1062px;height:19px;background:linear-gradient(#f4f4f4,#dedede);border-top:1px solid #b4b4b4"></div>
<div class="sdiv" style="left:297px"></div><div class="sdiv" style="left:346px"></div><div class="sdiv" style="left:465px"></div><div class="sdiv" style="left:601px"></div><div class="sdiv" style="left:640px"></div>
<div class="stx" style="left:182px">Print Layout View</div>
<div class="stx" style="left:304px">Sec</div><div class="stx" style="left:335px">1</div>
<div class="stx" style="left:356px">Pages:</div><div class="stx" style="left:409px">1 of 1</div>
<div class="stx" style="left:475px">Words:</div><div class="stx" style="left:537px">1 of 230</div>
<div class="stx" style="left:1068px">156%</div>
<div class="abs" style="left:1108px;top:791px;width:100px;height:5px;border-radius:3px;background:linear-gradient(#9a9a9a,#d6d6d6);border:1px solid #8d8d8d"></div>
<div class="abs" style="left:1159px;top:788px;width:11px;height:11px;border-radius:50%;background:linear-gradient(#fff,#d0d0d0);border:1px solid #8d8d8d"><div class="abs" style="left:2.500px;top:2.500px;width:4px;height:4px;border-radius:50%;background:#666"></div></div>
<svg class="abs" style="left:1224px;top:790px" width="13" height="13" viewBox="0 0 13 13"><path d="M12 2L2 12M12 6L6 12M12 10L10 12" stroke="#9a9a9a" stroke-width="1"/></svg>
<div class="abs" style="left:0;top:803px;width:1238px;height:1px;background:#4a4a4a"></div>
</div>
<!-- STYLES PALETTE -->
<div id="pal">
  <!-- title -->
  <div class="abs" style="left:0;top:0;width:192px;height:15px;background:linear-gradient(#f3f3f3,#dcdcdc);border-bottom:1px solid #b0b0b0"></div>
  <div class="pc" style="left:5px"></div><div class="pc" style="left:23.500px"></div><div class="pc" style="left:42px"></div>
  <div class="abs" style="left:66px;top:0;width:60px;text-align:center;font-size:11px;line-height:15px;color:#333;letter-spacing:.2px">Styles</div>
  <div class="abs" style="left:180px;top:2px;width:12px;height:12px;border-radius:50%;background:#3c3c3c"><div class="abs" style="left:2.500px;top:2.500px;width:7px;height:7px;border-radius:50%;border:1.500px solid #ddd;border-right-color:transparent"></div></div>
  <!-- tabs -->
  <div class="abs" style="left:0;top:15px;width:192px;height:24px;background:linear-gradient(#f6f6f6,#e2e2e2);border-bottom:1px solid #a8a8a8"></div>
  <div class="abs" style="left:0;top:15px;width:38px;height:24px;background:linear-gradient(#cdd9ee,#b9c8e4)"></div>
  <div class="abs" style="left:38px;top:15px;width:1px;height:24px;background:#b4b4b4"></div><div class="abs" style="left:77px;top:15px;width:1px;height:24px;background:#b4b4b4"></div><div class="abs" style="left:116px;top:15px;width:1px;height:24px;background:#b4b4b4"></div><div class="abs" style="left:155px;top:15px;width:1px;height:24px;background:#b4b4b4"></div>
  <div class="abs" style="left:10px;top:18px;width:18px;height:18px;border-radius:50%;background:#3a3a3a"><div class="abs" style="left:5px;top:1px;color:#fff;font-size:12px;font-weight:bold;line-height:16px">¶</div></div>
  <svg class="abs" style="left:48px;top:17px" width="20" height="20" viewBox="0 0 20 20"><rect x="1.500" y="1.500" width="10" height="12" fill="#666" stroke="#333"/><rect x="4.500" y="4" width="10" height="12" fill="#777" stroke="#333"/><rect x="7.500" y="6.500" width="10" height="12" fill="#7d7d7d" stroke="#333"/></svg>
  <svg class="abs" style="left:86px;top:17px" width="22" height="20" viewBox="0 0 22 20"><rect x="6" y="1.500" width="14" height="15" fill="#777" stroke="#333"/><rect x="4" y="3.500" width="14" height="15" rx="1" fill="#e4e4e4" stroke="#333" stroke-width="1.300"/><rect x="7" y="7" width="9" height="8" fill="#fff" stroke="#444"/><path d="M8 14L10.500 10.500L12.500 13L13.500 12L15 14Z" fill="#555"/><path d="M2.500 6H5.500M2.500 9H5.500M2.500 12H5.500M2.500 15H5.500" stroke="#333" stroke-width="1.400"/></svg>
  <svg class="abs" style="left:126px;top:17px" width="20" height="20" viewBox="0 0 20 20"><rect x="1.500" y="3.500" width="4.500" height="15" fill="#888" stroke="#444"/><rect x="7" y="5.500" width="4" height="13" fill="#aaa" stroke="#444"/><rect x="12" y="2.500" width="3" height="16" fill="#888" stroke="#444"/><rect x="15.500" y="4.500" width="3.500" height="14" fill="#999" stroke="#444"/></svg>
  <svg class="abs" style="left:164px;top:17px" width="20" height="20" viewBox="0 0 20 20"><path d="M8 8L15.500 15.500" stroke="#3a3a3a" stroke-width="3.800" stroke-linecap="round"/><circle cx="6" cy="6" r="4.600" fill="#3a3a3a"/><rect x="4.400" y="-1" width="3.200" height="6.500" fill="#ececec" transform="rotate(-45 6 6)"/><circle cx="15.300" cy="15.300" r="1.100" fill="#e8e8e8"/></svg>
  <!-- current style -->
  <div class="pt" style="left:7px;top:46px;letter-spacing:.46px">Current style of selected text:</div>
  <div class="abs" style="left:10px;top:62px;width:185px;height:24px;background:#fff;border:1px solid #b0b0b0"></div>
  <div class="abs" id="pcur" style="left:13px;top:62px;font-family:'Liberation Serif',serif;font-size:16.500px;line-height:24px;white-space:pre;color:#222;letter-spacing:.8px;word-spacing:1.500px">tle + 22 pt, After:  18</div>
  <!-- new style / select all -->
  <div class="abs" style="left:10px;top:95px;width:18px;height:18px;border-radius:50%;background:radial-gradient(circle at 50% 30%,#b5ec9a,#3eaa2c 60%,#1e7a17);border:1px solid #2c7a22"><div class="abs" style="left:3px;top:7px;width:10px;height:2px;background:#fff"></div><div class="abs" style="left:7px;top:3px;width:2px;height:10px;background:#fff"></div></div>
  <div class="pt" style="left:36px;top:97px;font-size:10.500px;letter-spacing:0">New Style...</div>
  <div class="abs" style="left:104px;top:96px;width:17px;height:8px;background:#b8c9f2"></div><div class="abs" style="left:104px;top:104px;width:11px;height:9px;background:#b8c9f2"></div>
  <svg class="abs" style="left:104px;top:97px" width="8" height="17" viewBox="0 0 8 17"><g fill="#141c58"><path d="M3.200 0H7V1H6.300V7H5.300V1H4.600V7H3.600V4A2 2 0 0 1 3.200 0Z"/><path d="M3.200 8.500H7V9.500H6.300V15.500H5.300V9.500H4.600V15.500H3.600V12.500A2 2 0 0 1 3.200 8.500Z"/></g></svg>
  <svg class="abs" style="left:114px;top:103px" width="10" height="14" viewBox="0 0 10 14"><path d="M1 1V11.500L3.500 9L5.500 13L7 12.300L5.200 8.500H8.500Z" fill="#111" stroke="#fff" stroke-width=".7"/></svg>
  <div class="pt" style="left:135px;top:97px;font-size:10.500px;letter-spacing:0">Select All</div>
  <div class="pt" style="left:8px;top:123px;letter-spacing:.42px">Pick a style to apply:</div>
  <!-- list -->
  <div class="abs" style="left:7px;top:139px;width:190px;height:146px;background:#fff;border:1px solid #a9a9a9"></div>
  <div class="srow" style="top:141px"><span style="position:absolute;left:24px;top:3px;font-size:13px;letter-spacing:.25px;color:#333">Clear Formatting</span></div>
  <div class="srow" style="top:170px"><span style="position:absolute;left:24px;top:3px;font-size:13px;letter-spacing:.25px;color:#333">Normal</span><span class="pil">¶</span></div>
  <div class="srow" style="top:199px"><span style="position:absolute;left:24px;top:2px;font-size:16px;font-weight:bold;letter-spacing:.7px;white-space:pre;color:#222">1   Heading 1</span><span class="pil">¶</span></div>
  <div class="srow" style="top:228px"><span style="position:absolute;left:24px;top:3px;font-size:15px;font-weight:bold;letter-spacing:.65px;white-space:pre;color:#222">1.1  Heading 2</span><span class="pil">¶</span></div>
  <div class="srow" style="top:257px"><span style="position:absolute;left:24px;top:3px;font-size:13.500px;font-weight:bold;letter-spacing:.55px;white-space:pre;color:#222">1.1.1  Heading 3</span><span class="pil">¶</span></div>
  <div class="abs" style="left:88px;top:289px;width:4px;height:4px;border-radius:50%;border:1px solid #999"></div><div class="abs" style="left:96px;top:289px;width:4px;height:4px;border-radius:50%;border:1px solid #999"></div><div class="abs" style="left:104px;top:289px;width:4px;height:4px;border-radius:50%;border:1px solid #999"></div>
  <!-- list dropdown -->
  <div class="pt" style="left:7px;top:307px">List:</div>
  <div class="abs" style="left:32px;top:304px;width:165px;height:20px;border:1px solid #a2a2a2;border-radius:4px;background:linear-gradient(#fdfdfd,#e3e3e3)"></div>
  <div class="pt" style="left:36px;top:307px;font-size:10.500px;letter-spacing:.05px">Recommended</div>
  <div class="abs" style="left:177px;top:308px;border-left:3px solid transparent;border-right:3px solid transparent;border-bottom:4px solid #444"></div><div class="abs" style="left:177px;top:315px;border-left:3px solid transparent;border-right:3px solid transparent;border-top:4px solid #444"></div>
  <div class="pcb" style="top:331px"></div><div class="pt" style="left:29px;top:331px;font-size:10.500px;letter-spacing:-.1px">Show Styles Guides</div>
  <div class="pcb" style="top:350px"></div><div class="pt" style="left:29px;top:350px;font-size:10.500px;letter-spacing:.02px">Show Direct Formatting Guides</div>
</div>
</body></html>
